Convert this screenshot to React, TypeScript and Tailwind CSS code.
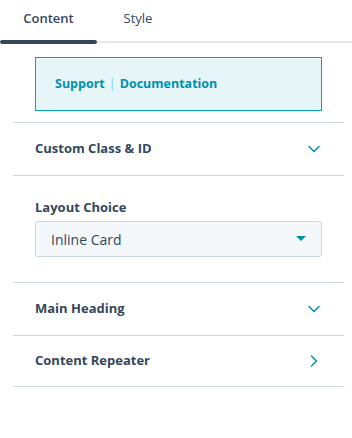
import { ChevronDown, ChevronRight } from "lucide-react"

const Section = ({ title, open, last }: { title: string; open?: boolean; last?: boolean }) => {
    return (
        <div className={`flex items-center justify-between pl-[22px] pr-[20px] border-b border-[#cbd6e2] ${last ? "h-[51px]" : "h-[53px]"}`}>
            <span className="font-bold text-[13px] text-[#33475b]">{title}</span>
            {open ? (
                <ChevronRight className="w-5 h-5 text-[#0091ae]" strokeWidth={1.75} />
            ) : (
                <ChevronDown className="w-5 h-5 text-[#0091ae]" strokeWidth={1.75} />
            )}
        </div>
    )
}

const App = () => {
    return (
        <div className="w-[352px] h-[438px] bg-white font-['Open_Sans',sans-serif] text-[#33475b]">
            <div className="relative flex h-[44px] items-end">
                <div className="absolute left-0 right-0 bottom-[1px] h-[2px] bg-[#e5e8f0]" />
                <div className="relative flex flex-col items-center w-[97px]">
                    <span className="text-[13px] font-semibold pb-[12px]">Content</span>
                    <div className="w-full h-[4px] rounded-full bg-[#33475b]" />
                </div>
                <div className="relative flex flex-col items-center w-[82px]">
                    <span className="text-[13px] pb-[16px]">Style</span>
                </div>
            </div>

            <div className="ml-[13px] mr-[8px]">
                <div className="pt-[13px] pb-[11px] border-b border-[#cbd6e2]">
                    <div className="mx-[22px] h-[54px] flex items-center px-[19px] bg-[#e5f5f8] border border-[#00a4bd]">
                        <span className="font-bold text-[12.5px] text-[#0091ae]">
                            Support<span className="font-normal text-[#7fd1de] mx-[4px]">|</span>Documentation
                        </span>
                    </div>
                </div>

                <Section title="Custom Class & ID" />

                <div className="pt-[22px] pb-[25px] px-[22px] border-b border-[#cbd6e2]">
                    <div className="font-bold text-[13px] leading-[18px] mb-[5px]">Layout Choice</div>
                    <div className="flex items-center justify-between h-[36px] pl-[15px] pr-[15px] bg-[#f5f8fa] border border-[#cbd6e2] rounded-[3px]">
                        <span className="text-[14px]">Inline Card</span>
                        <svg width="10" height="6" viewBox="0 0 10 6">
                            <path d="M0 0 L10 0 L5 5 Z" fill="#0091ae" />
                        </svg>
                    </div>
                </div>

                <Section title="Main Heading" />
                <Section title="Content Repeater" open last />
            </div>
        </div>
    )
}

export default App
